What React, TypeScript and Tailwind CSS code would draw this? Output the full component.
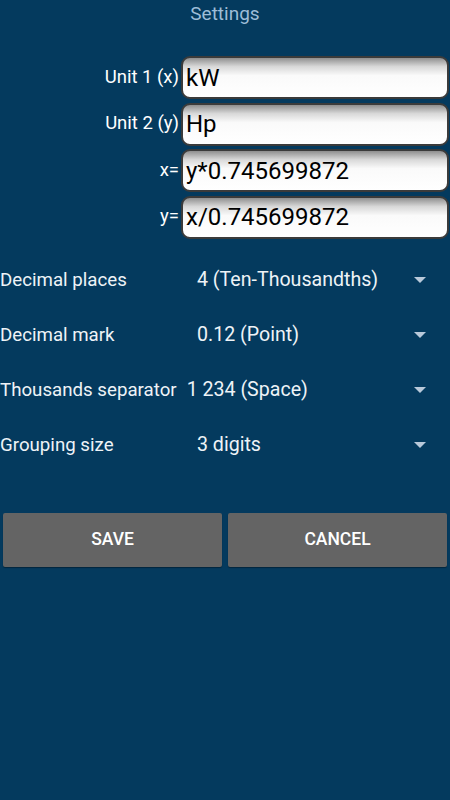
import React from "react";

const fields = [
    { label: "Unit 1 (x)", value: "kW" },
    { label: "Unit 2 (y)", value: "Hp" },
    { label: "x=", value: "y*0.745699872" },
    { label: "y=", value: "x/0.745699872" },
];

const spinners = [
    { label: "Decimal places", value: "4 (Ten-Thousandths)", labelClass: "w-[197px]" },
    { label: "Decimal mark", value: "0.12 (Point)", labelClass: "w-[197px]" },
    { label: "Thousands separator", value: "1 234 (Space)", labelClass: "w-auto pr-[10px]" },
    { label: "Grouping size", value: "3 digits", labelClass: "w-[197px]" },
];

function Arrow() {
    return (
        <svg width="14" height="8" viewBox="0 0 14 8" className="shrink-0">
            <path d="M1 1 L13 1 L7 7 Z" fill="#b9c9da" />
        </svg>
    );
}

export default function App() {
    return (
        <div
            className="w-[450px] h-[800px] bg-[#043a5e] overflow-hidden"
            style={{ fontFamily: "Roboto, 'Liberation Sans', sans-serif" }}
        >
            {/* Title */}
            <div className="pt-[2px] h-[56px] text-center text-[19px] leading-[24px] text-[#9dbdd8]">
                Settings
            </div>

            {/* Unit inputs */}
            <div className="flex flex-col gap-[3.5px] pr-[1px]">
                {fields.map((f) => (
                    <div key={f.label} className="flex items-center h-[43px]">
                        <div className="w-[181px] pr-[2px] text-right text-[18.5px] text-white">{f.label}</div>
                        <div className="flex-1 h-full rounded-[9px] border-2 border-[#3b3b3b] bg-[linear-gradient(to_bottom,#8f8f8f_0%,#d8d8d8_22%,#fafafa_45%,#ffffff_100%)] flex items-center pl-[3px] text-[24px] text-black">
                            {f.value}
                        </div>
                    </div>
                ))}
            </div>

            {/* Spinners */}
            <div className="mt-[14px] flex flex-col">
                {spinners.map((s) => (
                    <div key={s.label} className="flex items-center h-[55px] text-[#eef3f7]">
                        <div className={"shrink-0 text-[18.7px] " + s.labelClass}>{s.label}</div>
                        <div className="flex-1 text-[19.6px]">{s.value}</div>
                        <div className="pr-[23px]">
                            <Arrow />
                        </div>
                    </div>
                ))}
            </div>

            {/* Buttons */}
            <div className="mt-[40px] flex gap-[6px] px-[3px]">
                <button className="flex-1 h-[54px] bg-[#646464] rounded-[2px] text-[17.5px] font-medium text-white shadow-[0_1px_1px_rgba(0,0,0,0.35)]">
                    SAVE
                </button>
                <button className="flex-1 h-[54px] bg-[#646464] rounded-[2px] text-[17.5px] font-medium text-white shadow-[0_1px_1px_rgba(0,0,0,0.35)]">
                    CANCEL
                </button>
            </div>
        </div>
    );
}
